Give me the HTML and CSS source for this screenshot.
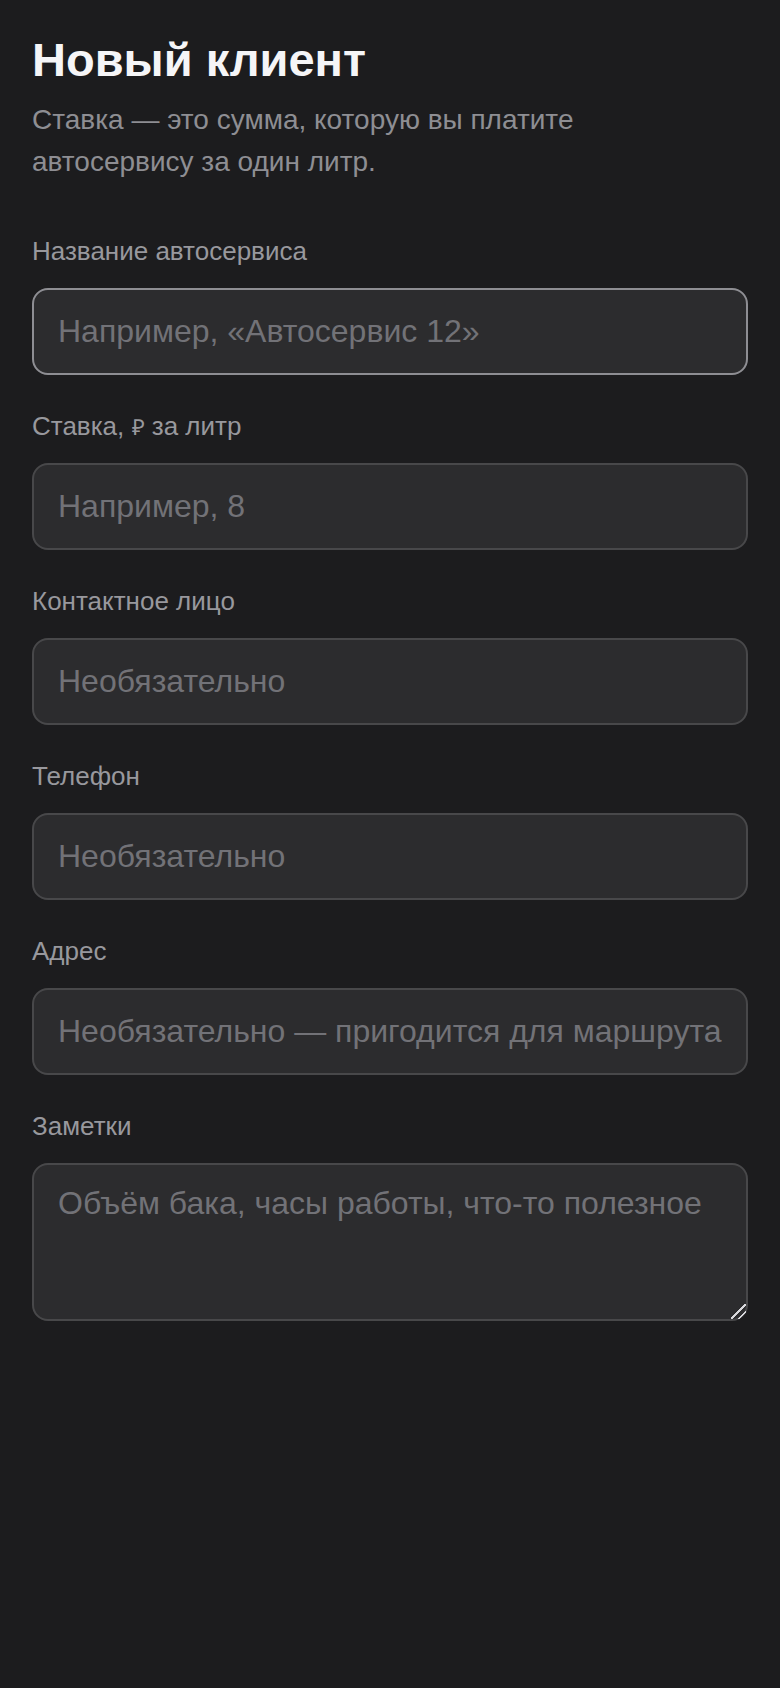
FILE: index.html
```html
<!DOCTYPE html>
<html lang="ru">
<head>
<meta charset="utf-8">
<title>Новый клиент</title>
<link rel="stylesheet" href="styles.css">
</head>
<body>
<main class="page">
  <header class="header">
    <h1 class="title">Новый клиент</h1>
    <p class="subtitle">Ставка — это сумма, которую вы платите автосервису за один литр.</p>
  </header>
  <form class="form">
    <div class="field">
      <label class="label" for="f-name">Название автосервиса</label>
      <input class="input is-focused" id="f-name" type="text" placeholder="Например, «Автосервис 12»">
    </div>
    <div class="field">
      <label class="label" for="f-rate">Ставка, <span class="currency">₽</span> за литр</label>
      <input class="input" id="f-rate" type="text" placeholder="Например, 8">
    </div>
    <div class="field">
      <label class="label" for="f-contact">Контактное лицо</label>
      <input class="input" id="f-contact" type="text" placeholder="Необязательно">
    </div>
    <div class="field">
      <label class="label" for="f-phone">Телефон</label>
      <input class="input" id="f-phone" type="text" placeholder="Необязательно">
    </div>
    <div class="field">
      <label class="label" for="f-address">Адрес</label>
      <input class="input" id="f-address" type="text" placeholder="Необязательно — пригодится для маршрута">
    </div>
    <div class="field">
      <label class="label" for="f-notes">Заметки</label>
      <textarea class="input textarea" id="f-notes" placeholder="Объём бака, часы работы, что-то полезное"></textarea>
    </div>
  </form>
</main>
</body>
</html>
```

FILE: styles.css
```css
:root {
  color-scheme: dark;
}

html, body {
  margin: 0;
  padding: 0;
  background: #1c1c1e;
}

body {
  font-family: "Liberation Sans", Arial, sans-serif;
  color: #f5f5f7;
  min-height: 1688px;
}

.page {
  padding: 32px 32px 64px;
}

.header {
  display: flex;
  flex-direction: column;
  gap: 11px;
}

.title {
  margin: 0;
  font-size: 47px;
  line-height: 56px;
  font-weight: 700;
  color: #f5f5f7;
}

.subtitle {
  margin: 0;
  max-width: 600px;
  font-size: 28px;
  line-height: 42px;
  color: #8e8e93;
}

.form {
  display: flex;
  flex-direction: column;
  gap: 33px;
  margin-top: 50px;
}

.field {
  display: flex;
  flex-direction: column;
}

.label {
  font-size: 26px;
  line-height: 36px;
  color: #98989d;
  margin-bottom: 19px;
}

.currency {
  font-size: 22px;
  line-height: 0;
  font-weight: 300;
}

.input {
  box-sizing: border-box;
  width: 100%;
  margin: 0;
  height: 87px;
  padding: 23px 24px;
  font-family: "Liberation Sans", Arial, sans-serif;
  font-size: 32px;
  line-height: 37px;
  color: #f5f5f7;
  background: #2c2c2e;
  border: 2px solid #48484a;
  border-radius: 16px;
  outline: none;
}

.input::placeholder {
  color: #727277;
  opacity: 1;
}

.input.is-focused {
  border-color: #8e8e93;
}

.textarea {
  height: 158px;
  padding: 20px 24px;
  resize: vertical;
  display: block;
}

.textarea::-webkit-resizer {
  background: linear-gradient(135deg,
    transparent 0 46%,
    #d8d8dc 46% 55%,
    transparent 55% 70%,
    #d8d8dc 70% 79%,
    transparent 79% 100%);
}
```
